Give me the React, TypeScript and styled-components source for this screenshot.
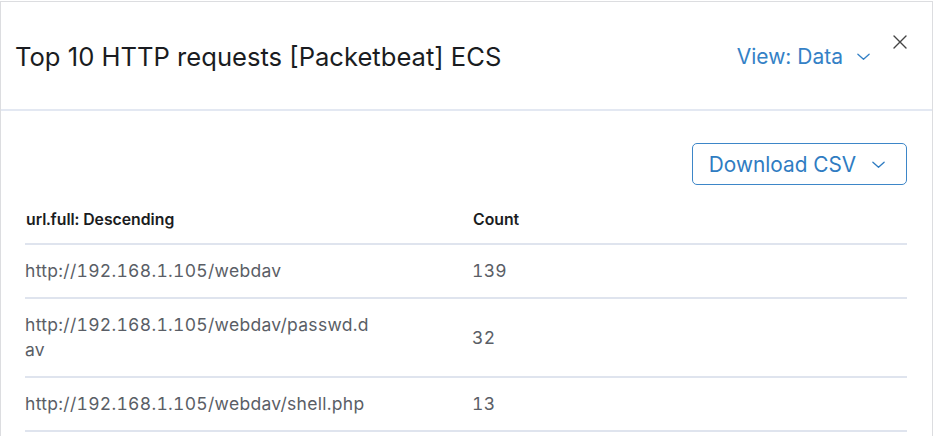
import React from "react";
import styled, { createGlobalStyle } from "styled-components";

const Global = createGlobalStyle`
  html, body { margin: 0; padding: 0; background: #ffffff; }
  body { font-family: Inter, "Noto Sans", sans-serif; -webkit-font-smoothing: antialiased; }
`;

const Panel = styled.div`
  box-sizing: border-box;
  margin-top: 1px;
  width: 933px;
  height: 435px;
  border: 1px solid #dcdde0;
  border-bottom: none;
  background: #fff;
  display: flex;
  flex-direction: column;
  overflow: hidden;
`;

const Header = styled.header`
  box-sizing: border-box;
  height: 109px;
  flex-shrink: 0;
  padding: 0 24px 0 14px;
  display: flex;
  align-items: center;
  border-bottom: 2px solid #e3e8f2;
  position: relative;
`;

const Title = styled.h2`
  margin: 0;
  flex: 1;
  font-size: 25.6px;
  font-weight: 400;
  color: #1a1c21;
  margin-top: 2px;
`;

const ViewButton = styled.button`
  border: none;
  background: none;
  padding: 0;
  margin-right: 37px;
  margin-top: 2px;
  display: flex;
  align-items: center;
  gap: 13px;
  font-family: inherit;
  font-size: 21px;
  color: #3481c6;
  cursor: pointer;
`;

const Close = styled.button`
  position: absolute;
  right: 24px;
  top: 32px;
  border: none;
  background: none;
  padding: 0;
  color: #444;
  cursor: pointer;
  display: flex;
`;

const Body = styled.div`
  padding: 32px 25px 0 24px;
  display: flex;
  flex-direction: column;
`;

const Toolbar = styled.div`
  display: flex;
  justify-content: flex-end;
`;

const CsvButton = styled.button`
  box-sizing: border-box;
  width: 215px;
  height: 42px;
  border: 1px solid #3d86c8;
  border-radius: 5px;
  background: #fff;
  display: flex;
  align-items: center;
  justify-content: center;
  gap: 15px;
  font-family: inherit;
  font-size: 20.8px;
  color: #2f7cc2;
  padding: 0 4px 0 0;
  cursor: pointer;
`;

const Table = styled.table`
  width: 100%;
  border-collapse: collapse;
  margin-top: 10px;
  font-feature-settings: "tnum" 1;
`;

const HeadCell = styled.th<{ $w?: string }>`
  text-align: left;
  font-size: 15.8px;
  font-weight: 600;
  color: #1a1c21;
  height: 48px;
  padding: 0 0 0 1px;
  border-bottom: 2px solid #dfe4ee;
  vertical-align: middle;
  width: ${(p) => p.$w || "auto"};
`;

const Cell = styled.td<{ $w?: string }>`
  font-size: 17.5px;
  letter-spacing: 0.3px;
  color: #5a5e66;
  padding: 13px 0 14px 0;
  line-height: 25px;
  border-bottom: 2px solid #dfe4ee;
  vertical-align: middle;
  width: ${(p) => p.$w || "auto"};
`;

const UrlText = styled.div`
  width: 350px;
  word-break: break-all;
`;

const Chevron = ({ size = 14 }: { size?: number }) => (
  <svg width={size} height={size} viewBox="0 0 16 16" fill="none">
    <path d="M2 5.5 L8 11 L14 5.5" stroke="currentColor" strokeWidth="1.4" strokeLinecap="round" strokeLinejoin="round" />
  </svg>
);

const rows = [
  { url: "http://192.168.1.105/webdav", count: 139 },
  { url: "http://192.168.1.105/webdav/passwd.dav", count: 32 },
  { url: "http://192.168.1.105/webdav/shell.php", count: 13 },
];

export default function App() {
  return (
    <>
      <Global />
      <Panel>
        <Header>
          <Title>Top 10 HTTP requests [Packetbeat] ECS</Title>
          <ViewButton>
            View: Data <Chevron size={15} />
          </ViewButton>
          <Close aria-label="Close">
            <svg width="16" height="16" viewBox="0 0 16 16">
              <path d="M2 2 L14 14 M14 2 L2 14" stroke="currentColor" strokeWidth="1.4" strokeLinecap="round" />
            </svg>
          </Close>
        </Header>
        <Body>
          <Toolbar>
            <CsvButton>
              Download CSV <Chevron size={15} />
            </CsvButton>
          </Toolbar>
          <Table>
            <thead>
              <tr>
                <HeadCell $w="446px">url.full: Descending</HeadCell>
                <HeadCell>Count</HeadCell>
              </tr>
            </thead>
            <tbody>
              {rows.map((r) => (
                <tr key={r.url}>
                  <Cell $w="446px">
                    <UrlText>{r.url}</UrlText>
                  </Cell>
                  <Cell>{r.count}</Cell>
                </tr>
              ))}
            </tbody>
          </Table>
        </Body>
      </Panel>
    </>
  );
}
